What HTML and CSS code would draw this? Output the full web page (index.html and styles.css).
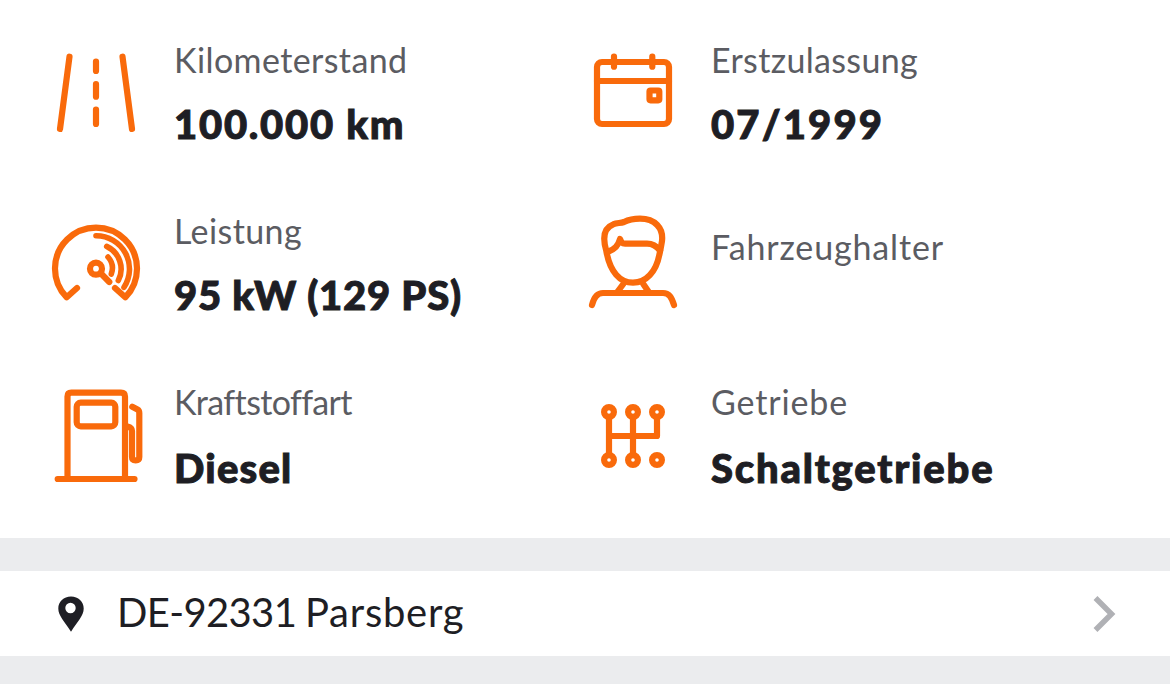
FILE: index.html
```
<!DOCTYPE html>
<html lang="de">
<head>
    <meta charset="UTF-8">
    <meta name="viewport" content="width=device-width, initial-scale=1.0">
    <title>Fahrzeugdaten</title>
    <link rel="stylesheet" href="styles.css">
</head>
<body>
    <div class="facts">
        <div class="fact">
            <svg class="icon" viewBox="0 0 96 96">
                <path d="M21.5 12.7L12 85M74.5 12.7L84 85M48 17.5V27M48 40V52.7M48 65.5V80"/>
            </svg>
            <div class="text">
                <div class="label mileage-label">Kilometerstand</div>
                <div class="value mileage">100.000 km</div>
            </div>
        </div>
        <div class="fact">
            <svg class="icon" viewBox="0 0 96 96">
                <rect x="12" y="18" width="72" height="62" rx="5"/>
                <path d="M12 37H84M29 12.7V22.7M67.3 12.7V22.7"/>
                <rect x="64.5" y="46.5" width="9.8" height="9.8" rx="1"/>
            </svg>
            <div class="text">
                <div class="label registration-label">Erstzulassung</div>
                <div class="value registration">07/1999</div>
            </div>
        </div>
        <div class="fact">
            <svg class="icon" viewBox="0 0 96 96">
                <path d="M29 73L18.7 82.3A41 41 0 1 1 77.3 82.3L67 73"/>
                <path class="thin" d="M48 20.7A33.3 33.3 0 0 1 76 72.3M58.7 31.4A25 25 0 0 1 70.3 65.5M60 42A16.8 16.8 0 0 1 63.3 59"/>
                <circle cx="48" cy="53.7" r="6"/>
                <path d="M52.5 58L61.3 67"/>
            </svg>
            <div class="text">
                <div class="label power-label">Leistung</div>
                <div class="value power">95 kW (129 PS)</div>
            </div>
        </div>
        <div class="fact">
            <svg class="icon" viewBox="0 0 96 96">
                <path d="M21.3 36C17.5 23 18.5 13 28.3 9.3C32 7.5 35 8.5 39 7C44 4.5 49 3.7 55 3.7C70 3.7 78.5 13 77 26C76 32 75.5 35 74.3 40C71 57 61 67.7 48 67.7C35 67.7 25 57 21.3 36Z"/>
                <path d="M23.5 36.5C30 34 33 31 35 24C36.5 27.5 37 28.7 40 28.7H62C68 28.7 71.5 31 75 35.5"/>
                <path d="M7 90C9 82 12 78 18 78H78C84 78 86.5 82 89 90M38.3 69L32.3 77M58.3 69L63.7 77"/>
            </svg>
            <div class="text single">
                <div class="label owner-label">Fahrzeughalter</div>
            </div>
        </div>
        <div class="fact">
            <svg class="icon" viewBox="0 0 96 96">
                <path d="M9.7 93H86.5M19.5 93V10.5Q19.5 6.7 23.3 6.7H73Q77 6.7 77 10.5V93"/>
                <rect x="28.7" y="16.7" width="38.6" height="23.6" rx="4"/>
                <path d="M84.3 20.7L89.5 23.5Q91.3 24.5 91.3 27V71Q91.3 74.3 87.7 74.3Q84 74.3 84 71V45Q84 41.5 79.5 40.5"/>
            </svg>
            <div class="text">
                <div class="label fuel-label">Kraftstoffart</div>
                <div class="value fuel">Diesel</div>
            </div>
        </div>
        <div class="fact">
            <svg class="icon" viewBox="0 0 96 96">
                <path d="M24 31V69M48 31V69M24 50H72V31"/>
                <circle cx="24" cy="26" r="4.9"/>
                <circle cx="48" cy="26" r="4.9"/>
                <circle cx="72" cy="26" r="4.9"/>
                <circle cx="24" cy="74" r="4.9"/>
                <circle cx="48" cy="74" r="4.9"/>
                <circle cx="72" cy="74" r="4.9"/>
            </svg>
            <div class="text">
                <div class="label gear-label">Getriebe</div>
                <div class="value gear">Schaltgetriebe</div>
            </div>
        </div>
    </div>
    <div class="location">
        <svg class="pin" viewBox="0 0 26 36">
            <path fill-rule="evenodd" d="M13 0.5C5.7 0.5 0.3 5.8 0.3 12.5C0.3 20 6.5 25 13 35.8C19.5 25 25.7 20 25.7 12.5C25.7 5.8 20.3 0.5 13 0.5ZM12.5 6.8A5.2 5.2 0 1 1 12.5 17.2A5.2 5.2 0 1 1 12.5 6.8Z"/>
        </svg>
        <div class="place"><span class="zip">DE-92331</span> <span class="city">Parsberg</span></div>
        <svg class="chevron" viewBox="0 0 24 38">
            <path d="M3.5 3L19.5 19L3.5 35"/>
        </svg>
    </div>
</body>
</html>
```
FILE: styles.css
```
body {
    margin: 0;
    background-color: #ebecee;
    font-family: Lato, 'Open Sans', sans-serif;
    color: #1e1e24;
}
.facts {
    display: grid;
    grid-template-columns: 537px 537px;
    grid-auto-rows: 171px;
    box-sizing: border-box;
    height: 538px;
    padding: 7px 48px 0;
    background-color: white;
}
.fact {
    display: flex;
    gap: 30px;
}
.icon {
    width: 96px;
    height: 96px;
    margin-top: 37px;
    flex-shrink: 0;
    overflow: visible;
    fill: none;
    stroke: #f96a0b;
    stroke-width: 6.2;
    stroke-linecap: round;
    stroke-linejoin: round;
}
.thin {
    stroke-width: 5.6;
}
.text {
    padding-top: 29px;
    white-space: nowrap;
}
.single {
    padding-top: 45px;
}
.label {
    font-size: 34px;
    line-height: 48px;
    color: #5b5c62;
}
.value {
    margin-top: 16px;
    font-size: 40px;
    line-height: 48px;
    font-weight: 900;
    -webkit-text-stroke: 1px #1e1e24;
}
.mileage-label {
    letter-spacing: 0.4px;
}
.mileage {
    letter-spacing: 1.75px;
}
.registration-label {
    letter-spacing: 0.34px;
}
.registration {
    letter-spacing: 2.15px;
}
.power-label {
    letter-spacing: 0.4px;
}
.power {
    letter-spacing: 0.8px;
}
.owner-label {
    letter-spacing: 0.85px;
}
.fuel-label {
    letter-spacing: -0.65px;
}
.fuel {
    margin-top: 18px;
    letter-spacing: 1.2px;
}
.gear-label {
    letter-spacing: 0.85px;
}
.gear {
    margin-top: 18px;
    letter-spacing: 1.8px;
}
.location {
    display: flex;
    align-items: center;
    box-sizing: border-box;
    height: 85px;
    margin-top: 33px;
    padding: 0 54px 0 58px;
    background-color: white;
}
.pin {
    width: 26px;
    height: 36px;
    fill: #1e1e24;
}
.place {
    margin: 0 0 3px 33px;
    font-size: 40px;
    line-height: 48px;
    word-spacing: -1.5px;
}
.zip {
    letter-spacing: -0.65px;
}
.city {
    letter-spacing: 0.75px;
}
.chevron {
    width: 24px;
    height: 38px;
    margin-left: auto;
    fill: none;
    stroke: #b0b1b5;
    stroke-width: 5.5;
}
```
